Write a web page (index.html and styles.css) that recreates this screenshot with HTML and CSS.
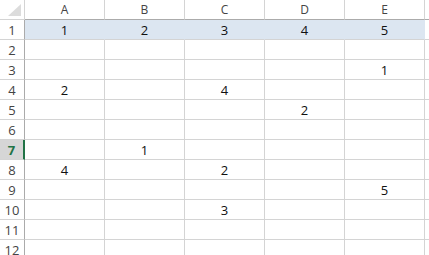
FILE: index.html
```html
<!DOCTYPE html>
<html>
<head>
    <title>Sheet1</title>
    <link rel="stylesheet" href="styles.css">
</head>
<body>
    <div class="sheet">
        <div class="corner">
            <svg width="13" height="12" viewBox="0 0 13 12"><polygon points="13,0 13,12 0,12" fill="#dcdcdc"/></svg>
        </div>
        <div class="col-head">A</div>
        <div class="col-head">B</div>
        <div class="col-head">C</div>
        <div class="col-head">D</div>
        <div class="col-head">E</div>
        <div class="col-head rest"></div>

        <div class="row-head">1</div>
        <div class="cell sel">1</div><div class="cell sel">2</div><div class="cell sel">3</div><div class="cell sel">4</div><div class="cell sel">5</div><div class="cell rest"></div>

        <div class="row-head">2</div>
        <div class="cell"></div><div class="cell"></div><div class="cell"></div><div class="cell"></div><div class="cell"></div><div class="cell rest"></div>

        <div class="row-head">3</div>
        <div class="cell"></div><div class="cell"></div><div class="cell"></div><div class="cell"></div><div class="cell">1</div><div class="cell rest"></div>

        <div class="row-head">4</div>
        <div class="cell">2</div><div class="cell"></div><div class="cell">4</div><div class="cell"></div><div class="cell"></div><div class="cell rest"></div>

        <div class="row-head">5</div>
        <div class="cell"></div><div class="cell"></div><div class="cell"></div><div class="cell">2</div><div class="cell"></div><div class="cell rest"></div>

        <div class="row-head">6</div>
        <div class="cell"></div><div class="cell"></div><div class="cell"></div><div class="cell"></div><div class="cell"></div><div class="cell rest"></div>

        <div class="row-head active">7</div>
        <div class="cell"></div><div class="cell">1</div><div class="cell"></div><div class="cell"></div><div class="cell"></div><div class="cell rest"></div>

        <div class="row-head">8</div>
        <div class="cell">4</div><div class="cell"></div><div class="cell">2</div><div class="cell"></div><div class="cell"></div><div class="cell rest"></div>

        <div class="row-head">9</div>
        <div class="cell"></div><div class="cell"></div><div class="cell"></div><div class="cell"></div><div class="cell">5</div><div class="cell rest"></div>

        <div class="row-head">10</div>
        <div class="cell"></div><div class="cell"></div><div class="cell">3</div><div class="cell"></div><div class="cell"></div><div class="cell rest"></div>

        <div class="row-head">11</div>
        <div class="cell"></div><div class="cell"></div><div class="cell"></div><div class="cell"></div><div class="cell"></div><div class="cell rest"></div>

        <div class="row-head">12</div>
        <div class="cell"></div><div class="cell"></div><div class="cell"></div><div class="cell"></div><div class="cell"></div><div class="cell rest"></div>
    </div>
</body>
</html>
```

FILE: styles.css
```css
body {
    margin: 0;
    background: #ffffff;
    overflow: hidden;
    font-family: "Open Sans", "Liberation Sans", sans-serif;
}

.sheet {
    display: grid;
    grid-template-columns: 25px 80px 80px 80px 80px 80px 10px;
    grid-auto-rows: 20px;
}

.sheet > div {
    box-sizing: border-box;
    border-right: 1px solid #d4d4d4;
    border-bottom: 1px solid #d4d4d4;
    display: flex;
    align-items: center;
    justify-content: center;
}

.corner {
    align-items: flex-end !important;
    justify-content: flex-end !important;
    padding: 0 3px 3px 0;
}

.col-head {
    font-size: 12px;
    color: #444444;
    border-bottom-color: #ababab !important;
}

.row-head {
    font-size: 13px;
    color: #444444;
    border-right-color: #ababab !important;
}

.row-head.active {
    background: #d6d6d6;
    color: #217346;
    font-weight: bold;
    border-right: 2px solid #217346 !important;
}

.cell {
    font-size: 13px;
    color: #111111;
}

.cell.sel {
    background: #dce6f1;
    border-right-color: #dce6f1 !important;
}

.rest {
    border-right: none !important;
}
```
